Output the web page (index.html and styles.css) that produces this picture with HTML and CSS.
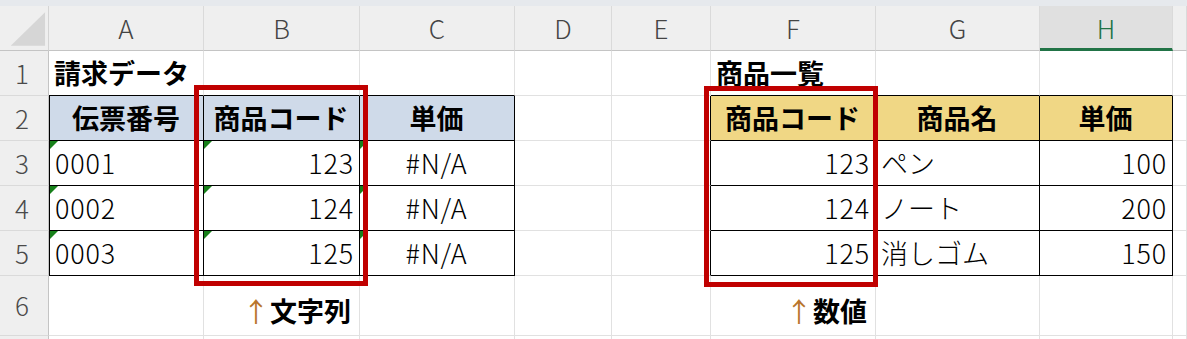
FILE: index.html
```html
<!DOCTYPE html>
<html lang="ja">
<head>
<meta charset="utf-8">
<title>VLOOKUP #N/A</title>
<link rel="stylesheet" href="styles.css">
</head>
<body>
<div class="page">
  <div class="topbar"></div>
  <div class="sheet">
    <!-- column headers -->
    <div class="c corner"><svg width="49" height="44" viewBox="0 0 49 44"><polygon points="46,6 46,40 11,40" fill="#d6d6d6"/></svg></div>
    <div class="c hd">A</div>
    <div class="c hd">B</div>
    <div class="c hd">C</div>
    <div class="c hd">D</div>
    <div class="c hd">E</div>
    <div class="c hd">F</div>
    <div class="c hd">G</div>
    <div class="c hd sel">H</div>
    <div class="c hd"></div>

    <!-- row 1 -->
    <div class="c rh">1</div>
    <div class="c tb-bot title">請求データ</div>
    <div class="c tb-bot"></div>
    <div class="c tb-bot"></div>
    <div class="c"></div>
    <div class="c"></div>
    <div class="c tb-bot title">商品一覧</div>
    <div class="c tb-bot"></div>
    <div class="c tb-bot"></div>
    <div class="c"></div>

    <!-- row 2 -->
    <div class="c rh">2</div>
    <div class="c t tl th blue">伝票番号</div>
    <div class="c t th blue">商品コード</div>
    <div class="c t th blue">単価</div>
    <div class="c"></div>
    <div class="c er"></div>
    <div class="c t th gold">商品コード</div>
    <div class="c t th gold">商品名</div>
    <div class="c t th gold">単価</div>
    <div class="c"></div>

    <!-- row 3 -->
    <div class="c rh">3</div>
    <div class="c t tl err lat">0001</div>
    <div class="c t err num">123</div>
    <div class="c t err mid lat">#N/A</div>
    <div class="c"></div>
    <div class="c er"></div>
    <div class="c t num">123</div>
    <div class="c t">ペン</div>
    <div class="c t num">100</div>
    <div class="c"></div>

    <!-- row 4 -->
    <div class="c rh">4</div>
    <div class="c t tl err lat">0002</div>
    <div class="c t err num">124</div>
    <div class="c t err mid lat">#N/A</div>
    <div class="c"></div>
    <div class="c er"></div>
    <div class="c t num">124</div>
    <div class="c t">ノート</div>
    <div class="c t num">200</div>
    <div class="c"></div>

    <!-- row 5 -->
    <div class="c rh">5</div>
    <div class="c t tl err lat">0003</div>
    <div class="c t err num">125</div>
    <div class="c t err mid lat">#N/A</div>
    <div class="c"></div>
    <div class="c er"></div>
    <div class="c t num">125</div>
    <div class="c t">消しゴム</div>
    <div class="c t num">150</div>
    <div class="c"></div>

    <!-- row 6 -->
    <div class="c rh">6</div>
    <div class="c"></div>
    <div class="c note"><span class="arrow">↑</span><b>文字列</b></div>
    <div class="c"></div>
    <div class="c"></div>
    <div class="c"></div>
    <div class="c note"><span class="arrow">↑</span><b>数値</b></div>
    <div class="c"></div>
    <div class="c"></div>
    <div class="c"></div>

    <!-- row 7 -->
    <div class="c rh"></div>
    <div class="c"></div>
    <div class="c"></div>
    <div class="c"></div>
    <div class="c"></div>
    <div class="c"></div>
    <div class="c"></div>
    <div class="c"></div>
    <div class="c"></div>
    <div class="c"></div>
  </div>
  <div class="mark mark-text"></div>
  <div class="mark mark-num"></div>
</div>
</body>
</html>
```
FILE: styles.css
```css
* { box-sizing: border-box; }
html, body { margin: 0; padding: 0; background: #ffffff; }
body {
  font-family: "Noto Sans CJK JP", "Noto Sans", sans-serif;
  color: #000;
  overflow: hidden;
}
.page {
  position: relative;
  width: 1187px;
  height: 339px;
  overflow: hidden;
}
.topbar {
  height: 6px;
  background: #e6e9ed;
}
.sheet {
  display: grid;
  grid-template-columns: 49px 155px 156px 155px 97px 99px 165px 164px 133px 1fr;
  grid-template-rows: 45px 45px 45px 45px 45px 45px 60px 40px;
}
.c {
  position: relative;
  display: flex;
  align-items: center;
  padding: 0 6px 0 5px;
  border-right: 1px solid #e1e1e1;
  border-bottom: 1px solid #e1e1e1;
  font-size: 27px;
  font-weight: 300;
  line-height: 1.4;
  white-space: nowrap;
  background: #fff;
}
.corner {
  padding: 0;
  background: #efefef;
  border-right: 1px solid #d4d4d4;
  border-bottom: 1px solid #c4c4c4;
}
.corner svg { display: block; }
.hd {
  justify-content: center;
  background: #efefef;
  color: #444;
  font-size: 26px;
  padding: 0;
  border-right: 1px solid #dadada;
  border-bottom: 1px solid #c4c4c4;
}
.hd.sel {
  background: #e0e0e0;
  color: #217346;
  border-bottom: 3px solid #217346;
  padding-top: 2px;
}
.rh {
  justify-content: center;
  background: #efefef;
  color: #4a4a4a;
  font-size: 26px;
  padding: 0 4px 0 0;
  border-right: 1px solid #c4c4c4;
  border-bottom: 1px solid #dadada;
}
.title { font-weight: 700; }
.tb-bot { border-bottom-color: #000; }
.t {
  border-right-color: #000;
  border-bottom-color: #000;
}
.tl { border-left: 1px solid #000; }
.er { border-right-color: #000; }
.th {
  justify-content: center;
  font-weight: 700;
}
.blue { background: #cfdae9; }
.gold { background: #f0d785; }
.num {
  justify-content: flex-end;
  letter-spacing: 0.8px;
  padding-right: 5px;
}
.lat { letter-spacing: 0.8px; }
.mid { justify-content: center; }
.err::before {
  content: "";
  position: absolute;
  top: 0;
  left: 0;
  border-top: 8px solid #17801a;
  border-right: 8px solid transparent;
}
.note {
  justify-content: flex-end;
  align-items: flex-end;
  padding-bottom: 5px;
  padding-right: 8px;
}
.note b { font-weight: 700; }
.arrow {
  display: inline-flex;
  justify-content: center;
  width: 12px;
  margin-right: 8px;
  color: #b8742c;
  font-weight: 400;
}
.mark {
  position: absolute;
  border: 5px solid #c00000;
}
.mark-text {
  left: 194px;
  top: 85px;
  width: 174px;
  height: 201px;
}
.mark-num {
  left: 704px;
  top: 86px;
  width: 174px;
  height: 201px;
}
```
